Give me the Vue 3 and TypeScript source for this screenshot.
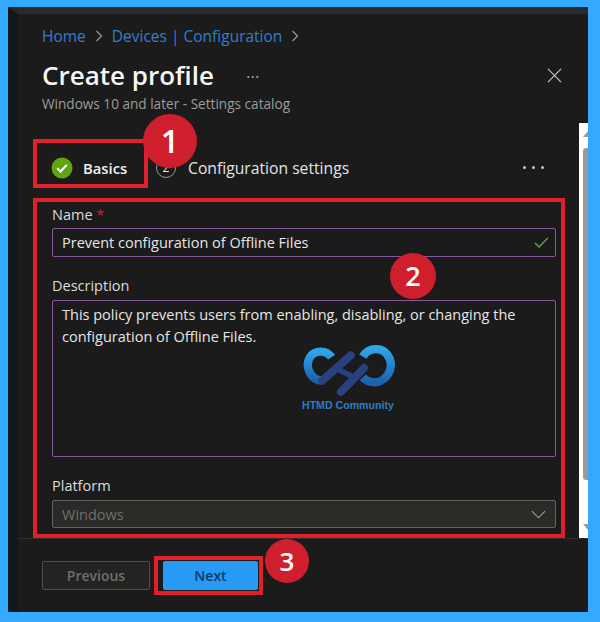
<template>
  <div class="page">
    <div class="window">
      <header class="header">
        <nav class="crumbs">
          <a>Home</a>
          <svg class="crumb-sep" viewBox="0 0 8 12"><path d="M1.5 1l5 5-5 5" /></svg>
          <a>Devices | Configuration</a>
          <svg class="crumb-sep" viewBox="0 0 8 12"><path d="M1.5 1l5 5-5 5" /></svg>
        </nav>
        <div class="title-row">
          <h1>Create profile</h1>
          <span class="title-more">...</span>
          <svg class="close" viewBox="0 0 16 16"><path d="M1 1l14 14M15 1L1 15" /></svg>
        </div>
        <p class="subtitle">Windows 10 and later - Settings catalog</p>
      </header>

      <div class="scroll-row">
        <main class="content">
          <div class="tabs">
            <div class="tab-active red-box">
              <svg class="done" viewBox="0 0 22 22">
                <circle cx="11" cy="11" r="10.5" />
                <path d="M6.2 11.3l3.3 3.2 6.3-6.6" />
              </svg>
              <span>Basics</span>
            </div>
            <span class="step-num">2</span>
            <span class="tab-label">Configuration settings</span>
            <span class="tab-more">
              <i></i><i></i><i></i>
            </span>
            <span class="badge badge-1">1</span>
          </div>

          <form class="form red-box" @submit.prevent>
            <label class="field-label">Name <em>*</em></label>
            <div class="name-input">
              <input v-model="name" class="text-input" readonly />
              <svg class="valid" viewBox="0 0 16 12"><path d="M1 6.5l4.4 4.4L15 1" /></svg>
            </div>

            <label class="field-label gap">Description</label>
            <div class="desc-input">
              <textarea v-model="description" readonly></textarea>
              <div class="watermark">
                <svg viewBox="90 60 290 165" width="97" height="55">
                  <defs>
                    <linearGradient id="ring" x1="0" y1="0" x2="0" y2="1">
                      <stop offset="0" stop-color="#2fa4ea" />
                      <stop offset="1" stop-color="#1b62ad" />
                    </linearGradient>
                  </defs>
                  <path class="ring" d="M178 106C164 84 128 82 113 106C97 134 115 176 152 176" />
                  <path class="ring" d="M272 104C288 76 330 72 348 102C372 140 338 188 298 180C286 178 278 173 272 166" />
                  <path class="bar" d="M150 176L236 100" />
                  <path class="bar" d="M206 210L276 138" />
                  <path class="bar thin" d="M190 138L246 166" />
                </svg>
                <span>HTMD Community</span>
              </div>
            </div>
            <span class="badge badge-2">2</span>

            <label class="field-label gap">Platform</label>
            <div class="select">
              <span>{{ platform }}</span>
              <svg viewBox="0 0 16 9"><path d="M1 1l7 7 7-7" /></svg>
            </div>
          </form>
        </main>

        <aside class="scrollbar">
          <span class="arrow up"></span>
          <span class="thumb"></span>
          <span class="arrow down"></span>
        </aside>
      </div>

      <footer class="footer">
        <button class="btn-prev" type="button" disabled>Previous</button>
        <div class="next-wrap red-box">
          <button class="btn-next" type="button">Next</button>
        </div>
        <span class="badge badge-3">3</span>
      </footer>
    </div>
  </div>
</template>

<script setup lang="ts">
import { ref } from 'vue'

const name = ref('Prevent configuration of Offline Files')
const description = ref(
  'This policy prevents users from enabling, disabling, or changing the configuration of Offline Files.'
)
const platform = ref('Windows')
</script>

<style>
html,
body {
  margin: 0;
  background: #33aaff;
}
</style>

<style scoped>
.page {
  width: 600px;
  height: 622px;
  box-sizing: border-box;
  padding: 7px 12px 10px 8px;
  background: #33aaff;
  font-family: "Open Sans", "Liberation Sans", sans-serif;
  color: #e8e8e8;
}

.window {
  height: 100%;
  box-sizing: border-box;
  display: flex;
  flex-direction: column;
  background: #1b1b1b;
  border-top: 7px solid #2a2a2a;
  border-left: 10px solid #10181c;
}

.header {
  height: 109px;
  box-sizing: border-box;
  padding: 7px 24px 0;
}

.crumbs {
  display: flex;
  align-items: center;
  height: 30px;
  font-size: 15.5px;
  color: #2f7fd0;
}

.crumb-sep {
  width: 8px;
  height: 12px;
  margin: 0 9px;
  fill: none;
  stroke: #9a9a9a;
  stroke-width: 1.2;
}

.title-row {
  display: flex;
  align-items: center;
  height: 40px;
  margin-top: 4px;
}

h1 {
  margin: 0;
  font-size: 26px;
  font-weight: 600;
  color: #f6f6f6;
}

.title-more {
  margin: -8px 0 0 32px;
  font-size: 17px;
  color: #a8a8a8;
}

.close {
  width: 15px;
  height: 15px;
  margin-left: auto;
  margin-right: 2px;
  fill: none;
  stroke: #c8c8c8;
  stroke-width: 1.2;
}

.subtitle {
  margin: 0;
  font-size: 13.6px;
  line-height: 18px;
  color: #9c9c9c;
}

.scroll-row {
  flex: 1;
  display: flex;
  min-height: 0;
}

.content {
  width: 547px;
  box-sizing: border-box;
  padding-left: 15px;
}

.red-box {
  box-sizing: border-box;
  border: 4px solid #e0202c;
}

.tabs {
  position: relative;
  display: flex;
  align-items: center;
  height: 49px;
  margin: 16px 0 10px;
}

.tab-active {
  display: flex;
  align-items: center;
  width: 115px;
  height: 49px;
  padding: 8px 0 0 14px;
  font-size: 14.8px;
  font-weight: 600;
  color: #f0f0f0;
}

.done {
  width: 22px;
  height: 22px;
  margin-right: 10px;
}

.done circle {
  fill: #5ea50f;
}

.done path {
  fill: none;
  stroke: #fff;
  stroke-width: 2;
}

.step-num {
  width: 20px;
  height: 20px;
  box-sizing: border-box;
  margin: 8px 0 0 8px;
  border: 1px solid #9a9a9a;
  border-radius: 50%;
  font-size: 12px;
  line-height: 18px;
  text-align: center;
}

.tab-label {
  margin: 8px 0 0 12px;
  font-size: 15.7px;
  color: #e4e4e4;
}

.tab-more {
  display: flex;
  gap: 6px;
  margin: 7px 21px 0 auto;
}

.tab-more i {
  width: 3px;
  height: 3px;
  border-radius: 50%;
  background: #c4c4c4;
}

.badge {
  position: absolute;
  border-radius: 50%;
  background: #d01f2c;
  color: #fff;
  font-weight: 600;
  text-align: center;
  z-index: 2;
}

.badge-1 {
  left: 110px;
  top: -25px;
  width: 54px;
  height: 54px;
  font-size: 32px;
  line-height: 54px;
}

.form {
  position: relative;
  width: 532px;
  height: 340px;
  display: flex;
  flex-direction: column;
  padding: 3px 5px 6px 15px;
}

.field-label {
  height: 20px;
  font-size: 14.5px;
  line-height: 20px;
  color: #dcdcdc;
}

.field-label em {
  font-style: normal;
  color: #c8202c;
}

.field-label.gap {
  margin-top: 19px;
}

.name-input {
  position: relative;
  margin-top: 3px;
}

.text-input,
textarea {
  display: block;
  width: 100%;
  box-sizing: border-box;
  background: #1b1b1b;
  border: 1px solid #84589a;
  border-radius: 2px;
  outline: none;
  color: #e6e6e6;
  font-family: inherit;
  font-size: 14.5px;
}

.text-input {
  height: 29px;
  padding: 0 9px;
}

.valid {
  position: absolute;
  right: 7px;
  top: 9px;
  width: 15px;
  height: 11px;
  fill: none;
  stroke: #5fb04a;
  stroke-width: 1.4;
}

.desc-input {
  position: relative;
  margin-top: 4px;
}

textarea {
  height: 157px;
  padding: 3px 9px;
  line-height: 22px;
  resize: none;
}

.watermark {
  position: absolute;
  left: 250px;
  top: 42px;
  display: flex;
  flex-direction: column;
  align-items: flex-start;
  pointer-events: none;
}

.watermark span {
  margin-top: 2px;
  font-family: "Liberation Sans", sans-serif;
  font-size: 10.6px;
  font-weight: 700;
  line-height: 12px;
  color: #2f7cc4;
}

.ring {
  fill: none;
  stroke: url(#ring);
  stroke-width: 25;
}

.bar {
  fill: none;
  stroke: #27427f;
  stroke-width: 24;
  stroke-linecap: round;
}

.bar.thin {
  stroke-width: 16;
  stroke-linecap: butt;
}

.badge-2 {
  left: 353px;
  top: 51px;
  width: 46px;
  height: 46px;
  font-size: 27px;
  line-height: 46px;
}

.select {
  display: flex;
  align-items: center;
  justify-content: space-between;
  height: 28px;
  box-sizing: border-box;
  margin-top: 4px;
  padding: 0 9px;
  background: #2a2a27;
  border: 1px solid #626262;
  border-radius: 2px;
  font-size: 14.5px;
  color: #6f6f6f;
}

.select svg {
  width: 15px;
  height: 9px;
  fill: none;
  stroke: #a0a0a0;
  stroke-width: 1.2;
}

.scrollbar {
  position: relative;
  width: 9px;
  margin-left: 14px;
  background: #fff;
}

.thumb {
  position: absolute;
  left: 4px;
  right: 0;
  top: 25px;
  height: 332px;
  border-radius: 3px 0 0 3px;
  background: #9a9a9a;
}

.arrow {
  position: absolute;
  right: 0;
  width: 0;
  height: 0;
  border-style: solid;
  border-color: transparent;
}

.arrow.up {
  top: 8px;
  border-width: 0 0 6px 5px;
  border-bottom-color: #9a9a9a;
}

.arrow.down {
  bottom: 8px;
  border-width: 6px 0 0 5px;
  border-top-color: #9a9a9a;
}

.footer {
  position: relative;
  flex: none;
  height: 74px;
  box-sizing: border-box;
  display: flex;
  align-items: flex-start;
  padding: 17px 0 0 24px;
  border-top: 1px solid #2f2f2f;
}

button {
  font-family: inherit;
  font-size: 14px;
  font-weight: 600;
}

.btn-prev {
  width: 108px;
  height: 29px;
  margin-top: 5px;
  background: #232322;
  border: 1px solid #4e4e4e;
  border-radius: 2px;
  color: #6e6e6e;
}

.next-wrap {
  width: 109px;
  height: 39px;
  margin-left: 4px;
  padding: 1px 1px 1px 5px;
}

.btn-next {
  display: block;
  width: 100%;
  height: 100%;
  background: #2899f5;
  border: 0;
  border-radius: 2px;
  color: #0b3a66;
}

.badge-3 {
  left: 247px;
  top: 0;
  width: 44px;
  height: 44px;
  font-size: 26px;
  line-height: 44px;
}
</style>
